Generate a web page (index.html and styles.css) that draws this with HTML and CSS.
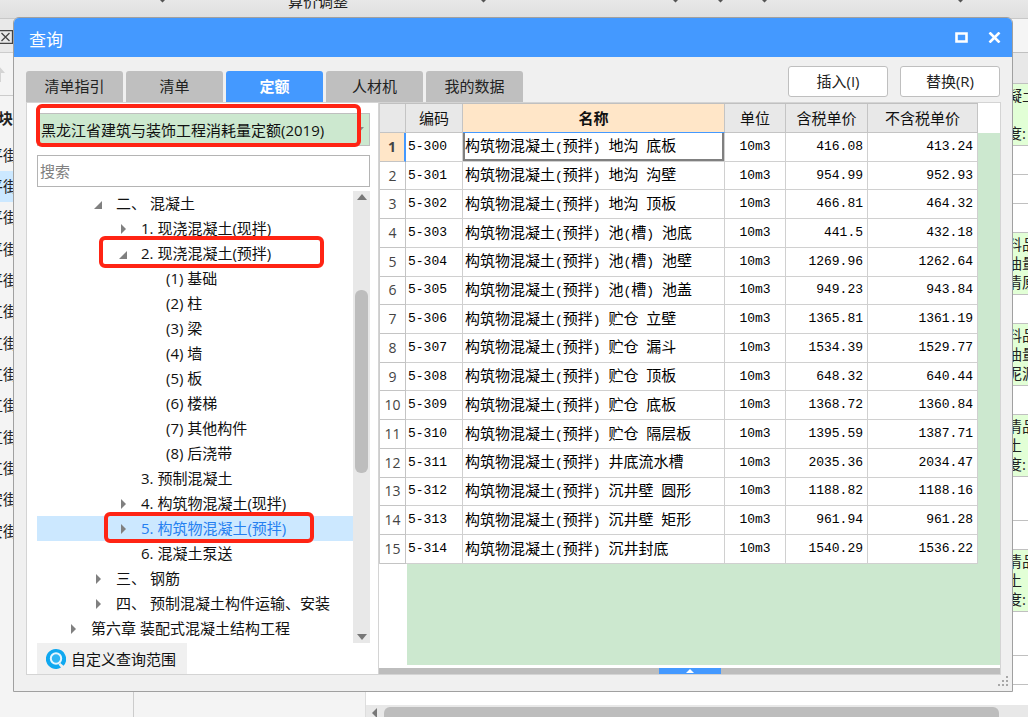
FILE: index.html
```html
<!DOCTYPE html>
<html lang="zh-CN">
<head>
<meta charset="utf-8">
<title>查询</title>
<link rel="stylesheet" href="styles.css">
</head>
<body>
<div class="app">
  <div class="ribbon">
    <span class="ribbon-label">算价调整</span>
    <svg class="ribbon-arrows" width="970" height="3" viewBox="0 0 970 3"><path d="M160 0h5l-2.500 2.500zM481 0h5l-2.500 2.500zM673 0h5l-2.500 2.500zM718 0h5l-2.500 2.500zM762 0h5l-2.500 2.500zM958 0h5l-2.500 2.500z" fill="#555"/></svg>
  </div>
  <div class="workspace">
    <aside class="nav">
      <div class="nav-top"><svg width="13" height="14" viewBox="0 0 13 14"><path d="M-2 .5h14.500v13h-14.500M1.500 3l8 8M9.500 3l-8 8" fill="none" stroke="#444" stroke-width="1.300"/></svg></div>
      <div class="nav-tools"><svg width="8" height="18" viewBox="0 0 8 18"><path d="M-2 0L5 8H1v9h-3z" fill="#d4d4d4"/></svg></div>
      <div class="nav-head">块</div>
      <ul class="nav-list">
        <li>平街</li><li class="on">平街</li><li>平街</li><li>平街</li><li>平街</li>
        <li>工街</li><li>工街</li><li>工街</li><li>工街</li><li>工街</li><li>工街</li>
        <li>安街</li><li>安街</li>
      </ul>
    </aside>
    <div class="middle"></div>
    <div class="main">
      <div class="strip">
        <div class="s-bar"></div>
        <div class="s-head"></div>
        <div class="s-note">凝土<br><br>度:</div>
        <div class="s-row"></div><div class="s-row"></div><div class="s-row"></div>
        <div class="s-note">料品<br>油量<br>清原</div>
        <div class="s-row"></div>
        <div class="s-note">料品<br>油量<br>泥沥</div>
        <div class="s-row"></div>
        <div class="s-note">清品<br>土<br>度:</div>
        <div class="s-row tall"></div><div class="s-row"></div>
        <div class="s-note">清品<br>土<br>度:</div>
        <div class="s-row tall"></div><div class="s-row"></div>
      </div>
      <div class="hscroll">
        <svg width="18" height="12" viewBox="0 0 18 12"><path d="M11 3v10L6 8z" fill="#777"/></svg>
        <div class="hthumb"></div>
      </div>
    </div>
  </div>

  <section class="dialog" role="dialog" aria-labelledby="dlg-title">
    <header class="titlebar">
      <h1 id="dlg-title">查询</h1>
      <button class="win-btn" aria-label="最大化"><svg width="13" height="11" viewBox="0 0 13 11"><path d="M1.500 1.500h10v8h-10z" fill="none" stroke="#fff" stroke-width="2.600"/></svg></button>
      <button class="win-btn" aria-label="关闭"><svg width="13" height="11" viewBox="0 0 13 11"><path d="M1.500 .5l10 10M11.500 .5l-10 10" fill="none" stroke="#fff" stroke-width="2.600"/></svg></button>
    </header>
    <div class="toolbar">
      <nav class="tabs">
        <button class="tab">清单指引</button>
        <button class="tab">清单</button>
        <button class="tab active">定额</button>
        <button class="tab">人材机</button>
        <button class="tab">我的数据</button>
      </nav>
      <button class="action">插入(I)</button>
      <button class="action">替换(R)</button>
    </div>
    <div class="panel">
      <div class="side">
        <div class="combo">
          <select aria-label="定额库"><option>黑龙江省建筑与装饰工程消耗量定额(2019)</option></select>
          <svg class="combo-arrow" width="7" height="4" viewBox="0 0 7 4"><path d="M0 0h7L3.500 4z" fill="#888"/></svg>
          <i class="mark mark-combo"></i>
        </div>
        <input class="search" type="text" placeholder="搜索" aria-label="搜索">
        <div class="tree-box">
          <ul class="tree">
            <li class="l2 open">二、 混凝土</li>
            <li class="l3 closed">1. 现浇混凝土(现拌)</li>
            <li class="l3 open">2. 现浇混凝土(预拌)<i class="mark mark-open"></i></li>
            <li class="l4">(1) 基础</li>
            <li class="l4">(2) 柱</li>
            <li class="l4">(3) 梁</li>
            <li class="l4">(4) 墙</li>
            <li class="l4">(5) 板</li>
            <li class="l4">(6) 楼梯</li>
            <li class="l4">(7) 其他构件</li>
            <li class="l4">(8) 后浇带</li>
            <li class="l3">3. 预制混凝土</li>
            <li class="l3 closed">4. 构筑物混凝土(现拌)</li>
            <li class="l3 closed selected">5. 构筑物混凝土(预拌)<i class="mark mark-sel"></i></li>
            <li class="l3">6. 混凝土泵送</li>
            <li class="l2 closed">三、 钢筋</li>
            <li class="l2 closed">四、 预制混凝土构件运输、安装</li>
            <li class="l1 closed">第六章 装配式混凝土结构工程</li>
          </ul>
          <div class="vscroll">
            <svg width="10" height="6" viewBox="0 0 10 6"><path d="M0 6L5 0l5 6z" fill="#777"/></svg>
            <div class="vtrack"><div class="vthumb"></div></div>
            <svg width="10" height="6" viewBox="0 0 10 6"><path d="M0 0h10L5 6z" fill="#777"/></svg>
          </div>
        </div>
        <button class="scope"><svg width="20" height="20" viewBox="0 0 20 20"><path d="M10 0a10 10 0 1 0 5 18.600l-2.500-3 1.800-1.500 3.200 2.600A10 10 0 0 0 10 0z" fill="#0fa8f0"/><circle cx="10" cy="9.500" r="5.200" fill="#2fb6f4" stroke="#e4f5fe" stroke-width="2"/></svg>自定义查询范围</button>
      </div>
      <div class="content">
        <div class="grid-area">
          <table class="grid">
            <colgroup><col class="c-idx"><col class="c-code"><col><col class="c-unit"><col class="c-tax"><col class="c-net"></colgroup>
            <thead><tr><th></th><th>编码</th><th class="cur">名称</th><th>单位</th><th>含税单价</th><th>不含税单价</th></tr></thead>
            <tbody>
              <tr class="cur"><th>1</th><td>5-300</td><td>构筑物混凝土<s>(</s>预拌<s>) </s>地沟<s> </s>底板</td><td>10m3</td><td>416.08</td><td>413.24</td></tr>
              <tr><th>2</th><td>5-301</td><td>构筑物混凝土<s>(</s>预拌<s>) </s>地沟<s> </s>沟壁</td><td>10m3</td><td>954.99</td><td>952.93</td></tr>
              <tr><th>3</th><td>5-302</td><td>构筑物混凝土<s>(</s>预拌<s>) </s>地沟<s> </s>顶板</td><td>10m3</td><td>466.81</td><td>464.32</td></tr>
              <tr><th>4</th><td>5-303</td><td>构筑物混凝土<s>(</s>预拌<s>) </s>池<s>(</s>槽<s>) </s>池底</td><td>10m3</td><td>441.5</td><td>432.18</td></tr>
              <tr><th>5</th><td>5-304</td><td>构筑物混凝土<s>(</s>预拌<s>) </s>池<s>(</s>槽<s>) </s>池壁</td><td>10m3</td><td>1269.96</td><td>1262.64</td></tr>
              <tr><th>6</th><td>5-305</td><td>构筑物混凝土<s>(</s>预拌<s>) </s>池<s>(</s>槽<s>) </s>池盖</td><td>10m3</td><td>949.23</td><td>943.84</td></tr>
              <tr><th>7</th><td>5-306</td><td>构筑物混凝土<s>(</s>预拌<s>) </s>贮仓<s> </s>立壁</td><td>10m3</td><td>1365.81</td><td>1361.19</td></tr>
              <tr><th>8</th><td>5-307</td><td>构筑物混凝土<s>(</s>预拌<s>) </s>贮仓<s> </s>漏斗</td><td>10m3</td><td>1534.39</td><td>1529.77</td></tr>
              <tr><th>9</th><td>5-308</td><td>构筑物混凝土<s>(</s>预拌<s>) </s>贮仓<s> </s>顶板</td><td>10m3</td><td>648.32</td><td>640.44</td></tr>
              <tr><th>10</th><td>5-309</td><td>构筑物混凝土<s>(</s>预拌<s>) </s>贮仓<s> </s>底板</td><td>10m3</td><td>1368.72</td><td>1360.84</td></tr>
              <tr><th>11</th><td>5-310</td><td>构筑物混凝土<s>(</s>预拌<s>) </s>贮仓<s> </s>隔层板</td><td>10m3</td><td>1395.59</td><td>1387.71</td></tr>
              <tr><th>12</th><td>5-311</td><td>构筑物混凝土<s>(</s>预拌<s>) </s>井底流水槽</td><td>10m3</td><td>2035.36</td><td>2034.47</td></tr>
              <tr><th>13</th><td>5-312</td><td>构筑物混凝土<s>(</s>预拌<s>) </s>沉井壁<s> </s>圆形</td><td>10m3</td><td>1188.82</td><td>1188.16</td></tr>
              <tr><th>14</th><td>5-313</td><td>构筑物混凝土<s>(</s>预拌<s>) </s>沉井壁<s> </s>矩形</td><td>10m3</td><td>961.94</td><td>961.28</td></tr>
              <tr><th>15</th><td>5-314</td><td>构筑物混凝土<s>(</s>预拌<s>) </s>沉井封底</td><td>10m3</td><td>1540.29</td><td>1536.22</td></tr>
            </tbody>
          </table>
        </div>
        <div class="splitter"><button class="split-btn" aria-label="展开"><svg width="8" height="4" viewBox="0 0 8 4"><path d="M0 4l4-4 4 4z" fill="#fff"/></svg></button></div>
      </div>
    </div>
    <svg class="grip" width="10" height="10" viewBox="0 0 10 10"><path d="M8 0h2v2h-2zM4 4h2v2h-2zM8 4h2v2h-2zM0 8h2v2h-2zM4 8h2v2h-2zM8 8h2v2h-2z" fill="#a8a8a8"/></svg>
  </section>
</div>
</body>
</html>
```

FILE: styles.css
```css
* { box-sizing: border-box; }
body {
  margin: 0;
  font: 15px/20px "Open Sans", "Noto Sans CJK SC", sans-serif;
  color: #222;
}
button, input, select { font: inherit; color: inherit; margin: 0; padding: 0; }
button { border: 0; background: none; }
ul { list-style: none; margin: 0; padding: 0; }
svg { display: block; flex: none; }

/* application behind the dialog */
.app {
  position: relative;
  height: 100vh;
  overflow: hidden;
  display: flex;
  flex-direction: column;
  background: #f4f4f4;
}
.ribbon {
  position: relative;
  height: 19px;
  flex: none;
  display: flex;
  align-items: flex-end;
  padding: 0 0 7px 288px;
  background: linear-gradient(#e8e8e8, #dfdfdf);
  border-bottom: 1px solid #c8c8c8;
  overflow: hidden;
}
.ribbon-arrows { position: absolute; left: 0; top: 0; }
.workspace { flex: 1; min-height: 0; display: flex; }
.nav { width: 134px; border-right: 1px solid #ccc; overflow: hidden; }
.nav-top { height: 34px; padding-top: 11px; background: #e9e9e9; border-bottom: 1px solid #ccc; }
.nav-tools { height: 43px; padding-top: 12px; border-bottom: 1px solid #ccc; }
.nav-head { height: 44px; line-height: 44px; font-weight: bold; text-indent: -2px; }
.nav-list li { height: 31px; line-height: 31px; text-indent: -12px; }
.nav-list li:nth-child(3n) { height: 32px; }
.nav-list .on { background: #cce8ff; }
.middle { width: 232px; border-right: 1px solid #ddd; }
.main { flex: 1; min-width: 0; display: flex; flex-direction: column; background: #fff; }
.strip { flex: 1; align-self: flex-end; width: 21px; overflow: hidden; white-space: nowrap; }
.s-bar { height: 34px; background: #f5f5f5; border-bottom: 1px solid #c0c0c0; }
.s-head { height: 31px; background: #e8e8e8; border-bottom: 1px solid #c0c0c0; }
.s-note { height: 62px; padding-top: 2px; line-height: 19px; background: #e2ffd6; border-bottom: 1px solid #c0c0c0; }
.s-row { height: 29px; border-bottom: 1px solid #c0c0c0; }
.s-row.tall { height: 44px; }
.hscroll { height: 12px; display: flex; background: #e8e8e8; padding-right: 29px; }
.hthumb { flex: 1; margin-top: 2px; background: #bdbdbd; border-radius: 6px 6px 0 0; }

/* dialog */
.dialog {
  position: absolute;
  inset: 17px 15px 25px 13px;
  display: flex;
  flex-direction: column;
  background: #f0f0f0;
  border: 1px solid #a0a0a0;
  border-radius: 6px 6px 0 0;
}
.titlebar {
  height: 39px;
  flex: none;
  display: flex;
  align-items: center;
  gap: 20px;
  padding: 0 11px 0 15px;
  background: #4499ff;
  border-radius: 5px 5px 0 0;
}
.titlebar h1 { flex: 1; margin: 0; font-size: 17px; font-weight: normal; line-height: 36px; padding-top: 4px; color: #fff; }
.win-btn { display: block; }
.toolbar { display: flex; align-items: flex-start; gap: 12px; padding: 9px 12px 0; height: 45px; flex: none; }
.tabs { flex: 1; display: flex; gap: 3px; padding-top: 5px; }
.tab { width: 97px; height: 31px; padding-bottom: 2px; background: #bfbfbf; border-radius: 3px 3px 0 0; }
.tab.active { background: #4499ff; color: #fff; font-weight: bold; }
.action { width: 100px; height: 31px; padding-bottom: 2px; background: #fff; border: 1px solid #bfbfbf; border-radius: 3px; }
.panel {
  flex: 1;
  min-height: 0;
  display: flex;
  margin: 0 11px 16px 12px;
  background: #fff;
  border: 1px solid #d4d4d4;
}
.grip { position: absolute; right: 4px; bottom: 5px; }

/* left pane */
.side { width: 352px; flex: none; display: flex; flex-direction: column; padding: 10px 8px 0 10px; border-right: 1px solid #d4d4d4; }
.combo { position: relative; height: 33px; margin-bottom: 9px; }
.combo select {
  appearance: none;
  width: 100%;
  height: 100%;
  padding-left: 3px;
  background: #cce8cf;
  border: 1px solid #bfbfbf;
  border-radius: 0;
  color: #111;
}
.combo-arrow { position: absolute; right: 6px; top: 14px; }
.search { height: 32px; padding: 0 2px; border: 1px solid #b4b4b4; background: #fff; margin-bottom: 4px; flex: none; }
.search::placeholder { color: #808080; opacity: 1; }
.tree-box { flex: 1; min-height: 0; display: flex; }
.tree { flex: 1; color: #111; }
.tree li { position: relative; height: 25px; line-height: 25px; white-space: nowrap; }
.l1 { padding-left: 54px; }
.l2 { padding-left: 79px; }
.l3 { padding-left: 104px; }
.l4 { padding-left: 129px; }
.open::before, .closed::before {
  content: "";
  display: inline-block;
  width: 8px;
  height: 8px;
  margin-left: -22px;
  margin-right: 14px;
  background: #808080;
}
.open::before { clip-path: polygon(100% 0, 100% 100%, 0 100%); }
.closed::before { height: 10px; clip-path: polygon(25% 0, 88% 50%, 25% 100%); }
.tree .selected { background: #cce8ff; color: #2680f0; }
.vscroll { width: 17px; display: flex; flex-direction: column; align-items: center; padding: 3px 0; background: #e8e8e8; }
.vtrack { flex: 1; width: 13px; padding: 90px 0 0; }
.vthumb { height: 183px; border-radius: 6px; background: #bdbdbd; }
.scope { align-self: flex-start; height: 31px; flex: none; display: flex; align-items: center; gap: 5px; padding: 0 11px 0 9px; background: #f0f0f0; color: #111; }

/* highlight frames */
.mark { position: absolute; border: 4px solid #ff2414; border-radius: 6px; pointer-events: none; }
.mark-combo { inset: -9px 9px -1px -1px; }
.mark-open { left: 62px; top: -5px; width: 225px; height: 32px; }
.mark-sel { left: 67px; top: -4px; width: 210px; height: 31px; }

/* price table */
.content { flex: 1; min-width: 0; display: flex; flex-direction: column; }
.grid-area {
  flex: 1;
  margin-bottom: 3px;
  padding-right: 22px;
  background:
    linear-gradient(#fff, #fff) 0 0 / 28px 100% no-repeat,
    linear-gradient(#fff, #fff) 0 0 / 100% 30px no-repeat,
    #cce8cf;
}
.grid {
  width: 100%;
  height: 461px;
  table-layout: fixed;
  border-collapse: separate;
  border-spacing: 0;
  border-left: 1px solid #ccc;
  border-top: 1px solid #c0c0c0;
  color: #111;
}
.c-idx { width: 26px; }
.c-code { width: 57px; }
.c-unit { width: 61px; }
.c-tax { width: 82px; }
.c-net { width: 110px; }
.grid th, .grid td { padding: 0 2px; border-right: 1px solid #d0d0d0; border-bottom: 1px solid #d0d0d0; white-space: nowrap; line-height: 20px; }
.grid thead th { height: 29px; background: #e8e8e8; font-weight: normal; border-color: #c4c4c4; }
.grid thead .cur { background: #ffe6c8; font-weight: bold; border-bottom-color: #4499ff; }
.grid tbody th { font: 14px/20px "Open Sans", sans-serif; color: #444; border-color: #c4c4c4; }
.grid tbody .cur th { background: #ffe6c8; font-weight: bold; border-right: 2px solid #4499ff; }
.grid td { background: #fff; font: 13px/20px "Liberation Mono", monospace; color: #000; }
.grid td:nth-child(3) { font: 15px/20px "Noto Sans CJK SC", sans-serif; }
.grid td:nth-child(4) { text-align: center; }
.grid td:nth-child(n+5) { text-align: right; padding-right: 4px; }
.grid .cur td:nth-child(3) { box-shadow: inset 2px 0 #808080, inset -2px -2px #808080; }
.grid s { font: 13px/20px "Liberation Mono", monospace; text-decoration: none; white-space: pre; }
.splitter { height: 6px; display: flex; justify-content: center; background: #bdbdbd; }
.split-btn { width: 62px; height: 6px; display: flex; align-items: center; justify-content: center; background: #4499ff; }
```
